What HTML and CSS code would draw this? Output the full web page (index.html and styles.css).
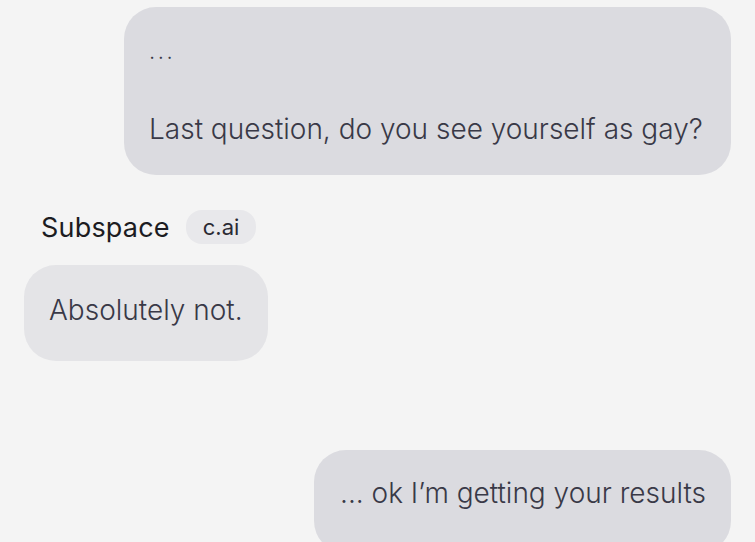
FILE: index.html
```html
<!DOCTYPE html>
<html lang="en">

<head>
    <meta charset="UTF-8">
    <meta name="viewport" content="width=device-width, initial-scale=1.0">
    <title>Chat</title>
    <link rel="stylesheet" href="styles.css">
</head>

<body>
    <section class="chat">
        <div class="row row-right">
            <div class="bubble bubble-user bubble-first">
                <p class="dots">...</p>
                <p class="gap"></p>
                <p>Last question, do you see yourself as gay?</p>
            </div>
        </div>

        <div class="row">
            <div class="char-head">
                <span class="char-name">Subspace</span>
                <span class="badge">c.ai</span>
            </div>
        </div>

        <div class="row">
            <div class="bubble bubble-bot">
                <p>Absolutely not.</p>
            </div>
        </div>

        <div class="row row-right row-last">
            <div class="bubble bubble-user bubble-open">
                <p>... ok I’m getting your results</p>
            </div>
        </div>
    </section>
</body>

</html>
```

FILE: styles.css
```css
html,
body {
    margin: 0;
    padding: 0;
    background: #f4f4f4;
    overflow: hidden;
}

body {
    font-family: Inter, "Noto Sans", sans-serif;
    color: #393947;
}

p {
    margin: 0;
}

.chat {
    display: flex;
    flex-direction: column;
    padding: 7px 24px 0 24px;
    height: 542px;
    box-sizing: border-box;
}

.row {
    display: flex;
}

.row-right {
    justify-content: flex-end;
}

.bubble {
    font-size: 28px;
    font-weight: 300;
    line-height: 39px;
    border-radius: 32px;
    padding: 25px 24px;
}

.bubble-user {
    background: #dbdbe0;
}

.bubble-first {
    width: 607px;
    box-sizing: border-box;
    padding: 25px 25px 26px 25px;
}

.dots {
    font-size: 22px;
    letter-spacing: 2.5px;
    height: 39px;
}

.gap {
    height: 39px;
}

.bubble-bot {
    background: #e4e4e7;
    padding: 26px 25px 31px 25px;
}

.char-head {
    display: flex;
    align-items: center;
    gap: 16px;
    margin: 35px 0 21px 17px;
}

.char-name {
    font-size: 27px;
    font-weight: 400;
    color: #1c1c22;
    letter-spacing: 0.2px;
}

.badge {
    background: #e8e8eb;
    color: #2a2a33;
    font-size: 22px;
    padding: 4px 17px 4px 17px;
    border-radius: 16px;
}

.row-last {
    margin-top: 89px;
}

.bubble-open {
    padding: 24px 25px 40px 26px;
}
```
